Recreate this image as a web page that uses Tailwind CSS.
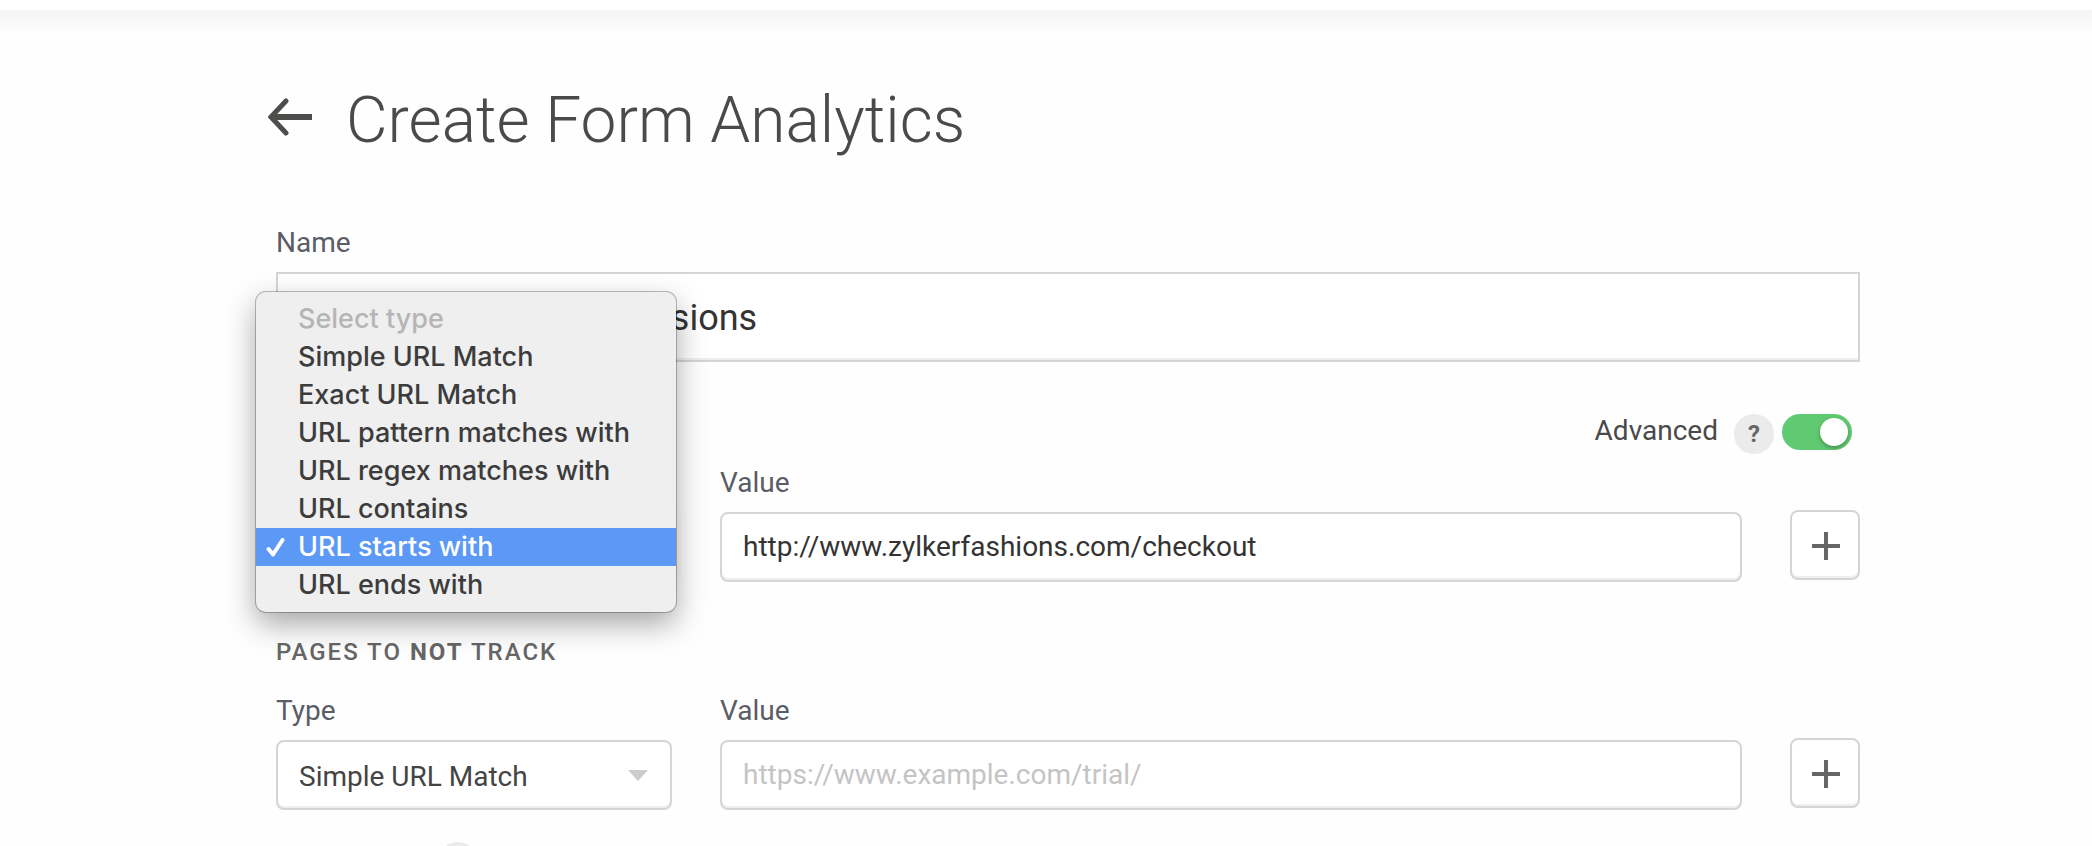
<!DOCTYPE html>
<html lang="en">
<head>
    <meta charset="UTF-8" />
    <meta name="viewport" content="width=device-width, initial-scale=1.0" />
    <script src="https://cdn.jsdelivr.net/npm/@tailwindcss/browser@4"></script>
    <title>Create Form Analytics</title>
</head>
<body class="h-screen overflow-hidden bg-[#fefefe] font-[Roboto,sans-serif] text-[28px] leading-[42px] text-[#4a4a4a]">
    <div class="h-[10px] bg-white"></div>
    <div class="h-[26px] bg-linear-to-b from-[#f4f4f4] to-[#fefefe]"></div>

    <main class="pl-[276px] pr-[232px] pt-[45px]">
        <header class="-ml-2 flex items-center gap-[34px]">
            <a href="#" aria-label="Back" class="pb-2">
                <svg class="h-10 w-11" viewBox="0 0 44 40" fill="none" stroke="#4d4d4b">
                    <path d="M44 20H4" stroke-width="6" />
                    <path d="M18 4L3 20L18 36" stroke-linecap="round" stroke-width="5" />
                </svg>
            </a>
            <h1 class="text-[64px] leading-20 font-light">Create Form Analytics</h1>
        </header>

        <form>
            <label for="name" class="mt-[61px] mb-2 block text-[#5a5c66]">Name</label>
            <input id="name" type="text" value="Checkout Form submissions" class="block h-[90px] w-full border-2 border-[#d5d5d5] bg-white px-[22px] pt-[2px] text-[36px] text-[#333] shadow-[inset_0_-2px_0_#eee]" />

            <div class="mt-12 flex h-11 items-start justify-between">
                <h2 class="text-2xl leading-8 font-medium tracking-[2px] text-[#666]">PAGES TO TRACK</h2>
                <div class="flex items-start pr-2">
                    <label for="advanced">Advanced</label>
                    <button type="button" aria-label="Help" class="mt-1 ml-4 flex size-10 items-center justify-center rounded-full bg-[#ebebeb] text-2xl font-bold text-[#666]">?</button>
                    <input id="advanced" type="checkbox" checked class="mt-1 ml-2 h-9 w-[70px] appearance-none rounded-full bg-[#60ca72] p-1 before:ml-auto before:block before:size-7 before:rounded-full before:bg-white before:shadow-[0_2px_4px_rgba(0,0,0,0.3)]" />
                </div>
            </div>

            <div class="mt-2 grid grid-cols-[396px_1fr_70px] items-end gap-x-12">
                <div>
                    <label for="type-track" class="mb-2 block text-[#5a5c66]">Type</label>
                    <div class="relative">
                        <select id="type-track" class="block h-[70px] w-full appearance-none rounded-lg border-2 border-[#d5d5d5] bg-white px-[21px] text-[#444] shadow-[0_0_10px_rgba(240,110,60,0.4)]">
                            <option>URL starts with</option>
                        </select>
                        <!-- open type menu -->
                        <ul role="listbox" class="absolute -top-[220px] -left-5 h-80 w-[420px] rounded-[10px] bg-[#efefef] py-2 font-[Inter,sans-serif] text-[27px] leading-[38px] font-medium text-[#3c3c3c] shadow-[0_0_0_1px_rgba(0,0,0,0.25),0_12px_30px_rgba(0,0,0,0.35)]">
                            <li role="option" class="pl-[42px] text-[#b5b5b5]">Select type</li>
                            <li role="option" class="pl-[42px]">Simple URL Match</li>
                            <li role="option" class="pl-[42px]">Exact URL Match</li>
                            <li role="option" class="pl-[42px]">URL pattern matches with</li>
                            <li role="option" class="pl-[42px]">URL regex matches with</li>
                            <li role="option" class="pl-[42px]">URL contains</li>
                            <li role="option" aria-selected="true" class="flex items-center bg-[#5c99f7] pl-[10px] text-white">
                                <svg class="mr-[13px] h-[19px] w-[19px]" viewBox="0 0 19 19" fill="none" stroke="currentColor" stroke-width="4" stroke-linecap="round" stroke-linejoin="round">
                                    <path d="M2.500 11L7 16.500L16.500 2" />
                                </svg>
                                URL starts with
                            </li>
                            <li role="option" class="pl-[42px]">URL ends with</li>
                        </ul>
                    </div>
                </div>
                <div>
                    <label for="value-track" class="mb-2 block text-[#5a5c66]">Value</label>
                    <input id="value-track" type="text" value="http://www.zylkerfashions.com/checkout" class="block h-[70px] w-full rounded-lg border-2 border-[#d5d5d5] bg-white px-[21px] pb-[2px] text-[#333] shadow-[inset_0_-2px_0_#eee]" />
                </div>
                <button type="button" aria-label="Add page to track" class="mb-[2px] flex size-[70px] items-center justify-center rounded-lg border-2 border-[#d5d5d5] bg-white pt-[2px] pl-[2px] shadow-[inset_0_-2px_0_#eee]">
                    <svg class="size-7" viewBox="0 0 28 28" stroke="#666" stroke-width="4"><path d="M0 14H28M14 0V28" /></svg>
                </button>
            </div>

            <h2 class="mt-[54px] text-2xl leading-8 font-medium tracking-[2px] text-[#666]">PAGES TO <b class="font-bold">NOT</b> TRACK</h2>

            <div class="mt-[22px] grid grid-cols-[396px_1fr_70px] items-end gap-x-12">
                <div>
                    <label for="type-skip" class="mb-2 block text-[#5a5c66]">Type</label>
                    <div class="relative">
                        <select id="type-skip" class="block h-[70px] w-full appearance-none rounded-lg border-2 border-[#d5d5d5] bg-white px-[21px] pt-1 text-[#444] shadow-[inset_0_-2px_0_#eee]">
                            <option>Simple URL Match</option>
                            <option>Exact URL Match</option>
                            <option>URL contains</option>
                        </select>
                        <svg class="pointer-events-none absolute top-[30px] right-6 h-[11px] w-5" viewBox="0 0 20 11" fill="#ccc"><path d="M0 0H20L10 11Z" /></svg>
                    </div>
                </div>
                <div>
                    <label for="value-skip" class="mb-2 block text-[#5a5c66]">Value</label>
                    <input id="value-skip" type="text" placeholder="https://www.example.com/trial/" class="block h-[70px] w-full rounded-lg border-2 border-[#d5d5d5] bg-white px-[21px] pb-[2px] text-[#333] shadow-[inset_0_-2px_0_#eee] placeholder:text-[#c4c4c4]" />
                </div>
                <button type="button" aria-label="Add page to not track" class="mb-[2px] flex size-[70px] items-center justify-center rounded-lg border-2 border-[#d5d5d5] bg-white pt-[2px] pl-[2px] shadow-[inset_0_-2px_0_#eee]">
                    <svg class="size-7" viewBox="0 0 28 28" stroke="#666" stroke-width="4"><path d="M0 14H28M14 0V28" /></svg>
                </button>
            </div>

            <div class="mt-8 flex items-start">
                <span class="w-[162px]">Forms</span>
                <button type="button" aria-label="Help" class="flex size-10 items-center justify-center rounded-full bg-[#ebebeb] text-2xl font-bold text-[#666]">?</button>
            </div>
        </form>
    </main>
</body>
</html>
